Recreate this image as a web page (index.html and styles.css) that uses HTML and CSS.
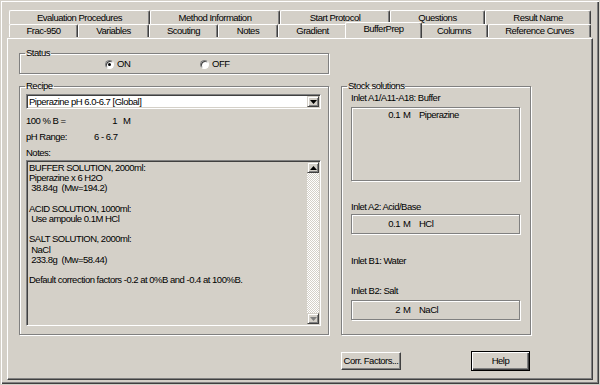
FILE: index.html
```html
<!DOCTYPE html>
<html lang="en">

<head>
    <meta charset="UTF-8">
    <meta name="viewport" content="width=device-width, initial-scale=1.0">
    <title>BufferPrep</title>
    <link rel="stylesheet" href="styles.css">
</head>

<body>
    <div class="window">
        <div class="tab-row row-back">
            <div class="tab t-eval">Evaluation Procedures</div>
            <div class="tab t-method">Method Information</div>
            <div class="tab t-start">Start Protocol</div>
            <div class="tab t-questions">Questions</div>
            <div class="tab t-result">Result Name</div>
        </div>
        <div class="tab-row row-front">
            <div class="tab t-frac">Frac-950</div>
            <div class="tab t-variables">Variables</div>
            <div class="tab t-scouting">Scouting</div>
            <div class="tab t-notes">Notes</div>
            <div class="tab t-gradient">Gradient</div>
            <div class="tab t-buffer active">BufferPrep</div>
            <div class="tab t-columns">Columns</div>
            <div class="tab t-reference">Reference Curves</div>
        </div>

        <div class="panel">
            <fieldset class="group status">
                <legend>Status</legend>
                <div class="radios">
                    <label class="radio"><span class="radio-dot checked"></span>ON</label>
                    <label class="radio"><span class="radio-dot"></span>OFF</label>
                </div>
            </fieldset>

            <fieldset class="group recipe">
                <legend>Recipe</legend>
                <div class="combo">
                    <span class="combo-text">Piperazine pH 6.0-6.7 [Global]</span>
                    <span class="scroll-btn">
                        <svg width="7" height="4" viewBox="0 0 7 4"><path d="M0 0h7L3.5 4z" fill="#000"/></svg>
                    </span>
                </div>
                <div class="info-row row-b">
                    <span class="info-label">100 % B =</span>
                    <span class="info-num">1</span>
                    <span class="info-unit">M</span>
                </div>
                <div class="info-row row-ph">
                    <span class="info-label ph">pH Range:</span>
                    <span>6 - 6.7</span>
                </div>
                <div class="info-row row-notes">Notes:</div>
                <div class="notes">
                    <div class="notes-text">BUFFER SOLUTION, 2000ml:
Piperazine x 6 H2O
 38.84g  (Mw=194.2)

ACID SOLUTION, 1000ml:
 Use ampoule 0.1M HCl

SALT SOLUTION, 2000ml:
 NaCl
 233.8g  (Mw=58.44)

Default correction factors -0.2 at 0%B and -0.4 at 100%B.</div>
                    <div class="scrollbar">
                        <span class="scroll-btn up">
                            <svg width="7" height="4" viewBox="0 0 7 4"><path d="M0 4h7L3.5 0z" fill="#000"/></svg>
                        </span>
                        <span class="scroll-track"></span>
                        <span class="scroll-btn down">
                            <svg width="7" height="4" viewBox="0 0 7 4"><path d="M0 0h7L3.5 4z" fill="#808080"/></svg>
                        </span>
                    </div>
                </div>
            </fieldset>

            <fieldset class="group stock">
                <legend>Stock solutions</legend>
                <div class="inlet-label first">Inlet A1/A11-A18: Buffer</div>
                <div class="inlet-box big">
                    <span class="amt">0.1</span><span class="unit">M</span><span>Piperazine</span>
                </div>
                <div class="inlet-label">Inlet A2: Acid/Base</div>
                <div class="inlet-box">
                    <span class="amt">0.1</span><span class="unit">M</span><span>HCl</span>
                </div>
                <div class="inlet-label water">Inlet B1: Water</div>
                <div class="inlet-label salt">Inlet B2: Salt</div>
                <div class="inlet-box last">
                    <span class="amt">2</span><span class="unit">M</span><span>NaCl</span>
                </div>
            </fieldset>

            <div class="buttons">
                <button type="button" class="btn btn-corr">Corr. Factors...</button>
                <button type="button" class="btn btn-default">Help</button>
            </div>
        </div>
    </div>
</body>

</html>
```
FILE: styles.css
```css
* {
    box-sizing: border-box;
}

body {
    margin: 0;
    background: #d4d0c8;
    font-family: "Liberation Sans", Arial, sans-serif;
    font-size: 9.5px;
    letter-spacing: -0.5px;
    line-height: 10px;
    color: #000;
}

.window {
    width: 599px;
    height: 384px;
    padding: 10px 6px 5px 7px;
    box-shadow: inset 1px 1px 0 #d4d0c8, inset 2px 2px 0 #fff, inset -1px -1px 0 #404040, inset -2px -2px 0 #808080;
}

/* tabs */
.tab-row {
    display: flex;
    padding-left: 2px;
}

.tab {
    flex: none;
    text-align: center;
    white-space: nowrap;
    background: #d4d0c8;
    border-top: 1px solid #fff;
    border-left: 1px solid #fff;
    border-right: 1px solid #404040;
    border-radius: 2px 2px 0 0;
    box-shadow: inset -1px 0 0 #808080;
}

.row-back .tab {
    height: 14px;
    padding-top: 1px;
    line-height: 12px;
}

.row-front .tab {
    height: 13px;
    line-height: 12px;
}

.row-front .tab.active {
    position: relative;
    z-index: 1;
    width: 77px;
    height: 16px;
    margin: -2px -2px 0;
    line-height: 12px;
}

.t-eval { width: 141px; }
.t-method { width: 130px; }
.t-start { width: 110px; }
.t-questions { width: 95px; }
.t-result { width: 106px; }
.t-frac { width: 69px; }
.t-variables { width: 71px; }
.t-scouting { width: 69px; }
.t-notes { width: 60px; }
.t-gradient { width: 69px; }
.t-columns { width: 68px; }
.t-reference { width: 103px; }

/* panel */
.panel {
    height: 342px;
    border: 1px solid;
    border-color: #fff #404040 #404040 #fff;
    box-shadow: inset -1px -1px 0 #808080;
    padding: 9px 0 0 11px;
    display: grid;
    grid-template-columns: 310px 190px;
    column-gap: 12px;
    align-content: start;
}

.group {
    margin: 0;
    min-width: 0;
    border: 1px solid #808080;
    box-shadow: inset 1px 1px 0 #fff, 1px 1px 0 #fff;
}

.group legend {
    padding: 0 1px;
    margin-left: -1px;
    line-height: 10px;
}

.status {
    grid-column: 1;
    padding: 1px 0 4px 6px;
}

.radios {
    display: flex;
    margin-left: 79px;
}

.radio {
    display: flex;
    align-items: center;
    width: 95px;
    height: 10px;
}

.radio-dot {
    width: 9px;
    height: 9px;
    margin-right: 3px;
    border-radius: 50%;
    background: #fff;
    border: 1px solid;
    border-color: #808080 #fff #fff #808080;
    box-shadow: inset 1px 1px 0 #404040;
    display: flex;
    align-items: center;
    justify-content: center;
}

.radio-dot.checked::after {
    content: "";
    width: 3px;
    height: 3px;
    border-radius: 50%;
    background: #000;
}

.recipe {
    grid-column: 1;
    grid-row: 2;
    margin-top: 7px;
    padding: 3px 7px 8px 6px;
}

.combo,
.notes {
    border: 1px solid;
    border-color: #808080 #fff #fff #808080;
    box-shadow: inset 1px 1px 0 #404040, inset -1px -1px 0 #d4d0c8;
    padding: 1px;
    display: flex;
}

.combo {
    height: 15px;
    background: #fff;
}

.combo-text {
    flex: 1;
    padding-left: 1px;
    line-height: 11px;
}

.scroll-btn {
    width: 12px;
    height: 11px;
    background: #d4d0c8;
    border: 1px solid;
    border-color: #d4d0c8 #404040 #404040 #d4d0c8;
    box-shadow: inset 1px 1px 0 #fff, inset -1px -1px 0 #808080;
    display: flex;
    align-items: center;
    justify-content: center;
}

.info-row {
    height: 10px;
    display: flex;
}

.row-b { margin-top: 7px; }
.row-ph { margin-top: 6px; }
.row-notes { margin-top: 6px; }

.info-label { width: 84px; }
.info-label.ph { width: 68px; }

.info-num {
    width: 7px;
    text-align: right;
}

.info-unit { margin-left: 6px; }

.notes {
    margin-top: 2px;
    height: 166px;
    background: #d4d0c8;
}

.notes-text {
    flex: 1;
    white-space: pre;
    padding: 1px 0 0 1px;
    line-height: 10.2px;
}

.scrollbar {
    width: 12px;
    display: flex;
    flex-direction: column;
}

.scroll-track {
    flex: 1;
    background: repeating-conic-gradient(#fff 0 25%, #d4d0c8 0 50%) 0 0 / 2px 2px;
}

/* stock solutions */
.stock {
    grid-column: 2;
    grid-row: 2;
    margin-top: 7px;
    padding: 0 10px 0 9px;
}

.stock legend {
    margin-left: -4px;
}

.inlet-label {
    height: 10px;
    margin-top: 21px;
}

.inlet-label.first { margin-top: 2px; }
.inlet-label.water { margin-top: 22px; }
.inlet-label.salt { margin-top: 20px; }

.inlet-box {
    height: 20px;
    margin-top: 2px;
    padding-top: 4px;
    border: 1px solid #808080;
    box-shadow: inset 1px 1px 0 #fff, 1px 1px 0 #fff;
    display: flex;
}

.inlet-box.big {
    height: 74px;
    margin-top: 4px;
    padding-top: 2px;
}

.inlet-box.last { margin-top: 4px; }

.amt {
    width: 48px;
    text-align: right;
}

.unit {
    width: 19px;
    padding-left: 3px;
}

/* buttons */
.buttons {
    grid-column: 2;
    grid-row: 3;
    margin-top: 16px;
    padding-right: 1px;
    display: flex;
    justify-content: space-between;
    align-items: flex-start;
}

.btn {
    margin: 0;
    padding: 0;
    font: inherit;
    letter-spacing: inherit;
    white-space: nowrap;
    color: #000;
    background: #d4d0c8;
    text-align: center;
}

.btn-corr {
    width: 60px;
    height: 18px;
    margin-top: 1px;
    border: 1px solid;
    border-color: #fff #404040 #404040 #fff;
    box-shadow: inset -1px -1px 0 #808080;
}

.btn-default {
    width: 59px;
    height: 20px;
    border: 1px solid #000;
    box-shadow: inset 1px 1px 0 #fff, inset -1px -1px 0 #404040, inset -2px -2px 0 #808080;
}
```
